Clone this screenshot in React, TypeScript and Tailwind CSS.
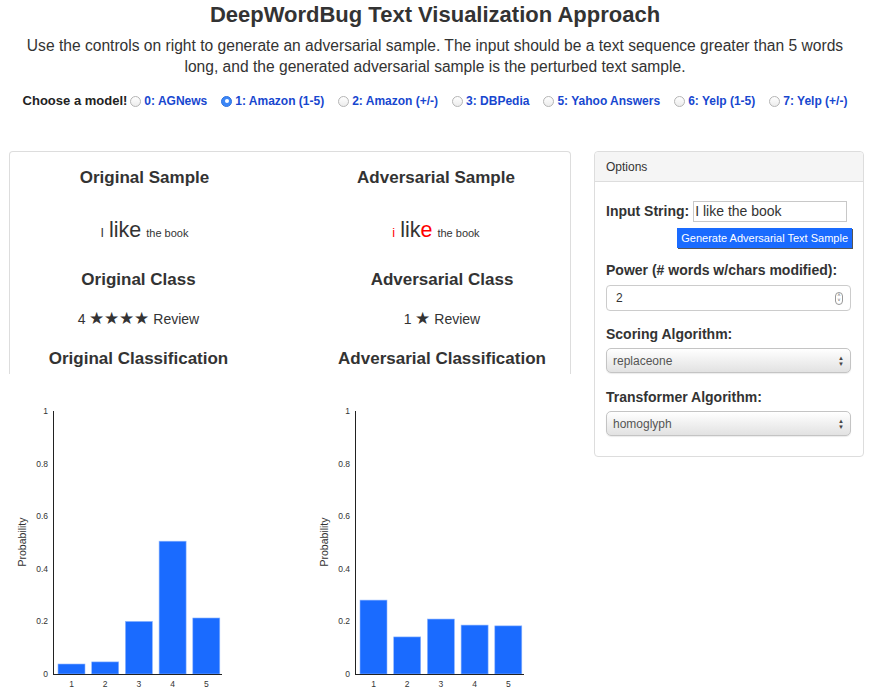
import React from 'react';

const models = [
  { id: 0, label: '0: AGNews' },
  { id: 1, label: '1: Amazon (1-5)' },
  { id: 2, label: '2: Amazon (+/-)' },
  { id: 3, label: '3: DBPedia' },
  { id: 5, label: '5: Yahoo Answers' },
  { id: 6, label: '6: Yelp (1-5)' },
  { id: 7, label: '7: Yelp (+/-)' },
];

const original = [0.038, 0.046, 0.2, 0.505, 0.213];
const adversarial = [0.281, 0.141, 0.209, 0.186, 0.183];

function Radio({ checked }: { checked: boolean }) {
  return checked ? (
    <span className="inline-flex items-center justify-center w-[11px] h-[11px] rounded-full bg-[#3b86f7] border border-[#2f73e0] mx-[3px]">
      <span className="w-[4px] h-[4px] rounded-full bg-white" />
    </span>
  ) : (
    <span className="inline-block w-[11px] h-[11px] rounded-full border border-[#b5b5b5] bg-gradient-to-b from-white to-[#ececec] mx-[3px]" />
  );
}

function Chart({ data }: { data: number[] }) {
  const y0 = 275;
  const h = 263;
  const ticks = [0, 0.2, 0.4, 0.6, 0.8, 1];
  return (
    <svg width="240" height="293" className="block" fontFamily="'Liberation Sans', Arial, sans-serif">
      <text
        x="0"
        y="0"
        fontSize="10.5"
        fill="#333"
        textAnchor="middle"
        transform="translate(26 143) rotate(-90)"
      >
        Probability
      </text>
      {ticks.map(t => (
        <text key={t} x="48" y={y0 - t * h + 3} fontSize="8.5" fill="#333" textAnchor="end">
          {t}
        </text>
      ))}
      {data.map((v, i) => {
        const x = 58 + i * 33.7;
        return (
          <g key={i}>
            <rect
              x={x}
              y={y0 - v * h}
              width="27"
              height={v * h}
              fill="#1a6bff"
              stroke="#8fb6ff"
              strokeWidth="0.6"
            />
            <text x={x + 13.5} y="288" fontSize="8.5" fill="#333" textAnchor="middle">
              {i + 1}
            </text>
          </g>
        );
      })}
      <line x1="53.5" y1="12" x2="53.5" y2={y0 + 0.5} stroke="#222" strokeWidth="1" />
      <line x1="53" y1={y0 + 0.5} x2="222" y2={y0 + 0.5} stroke="#222" strokeWidth="1" />
    </svg>
  );
}

function SelectBox({ value }: { value: string }) {
  return (
    <div className="h-[25px] w-[245px] flex items-center justify-between rounded-[5px] border border-[#c4c4c4] bg-gradient-to-b from-white to-[#e2e2e2] pl-[6px] pr-[6px] shadow-[0_1px_1px_rgba(0,0,0,0.08)]">
      <span className="text-[12px] text-[#555]">{value}</span>
      <span className="flex flex-col text-[6px] leading-[6px] text-[#444]">
        <span>▲</span>
        <span>▼</span>
      </span>
    </div>
  );
}

export default function App() {
  return (
    <div className="w-[870px] h-[693px] overflow-hidden bg-white text-[#333] font-['Liberation_Sans',Arial,sans-serif]">
      <h1 className="text-center text-[22px] font-bold leading-[30px]">
        DeepWordBug Text Visualization Approach
      </h1>
      <p className="mt-[5px] text-center text-[15.6px] leading-[21px]">
        Use the controls on right to generate an adversarial sample. The input should be a text sequence greater than 5 words
        <br />
        long, and the generated adversarial sample is the perturbed text sample.
      </p>
      <div className="mt-[14px] flex items-center justify-center h-[20px] font-bold">
        <span className="text-[#222] text-[13px]">Choose a model!</span>
        {models.map(m => (
          <span key={m.id} className="inline-flex items-center text-[12px] text-[#1747cf] mr-[11px] last:mr-0">
            <Radio checked={m.id === 1} />
            {m.label}
          </span>
        ))}
      </div>

      <div className="mt-[40px] flex pl-[9px] gap-[23px]">
        <div className="w-[562px]">
          <div className="h-[223px] border-t border-x border-[#ddd] rounded-t-[4px] grid grid-cols-[269px_1fr]">
            <div className="flex flex-col items-center">
              <h3 className="mt-[14px] text-[17px] font-bold leading-[24px]">Original Sample</h3>
              <div className="mt-[24px] h-[26px] flex items-baseline gap-[5px] text-[#333]">
                <span className="text-[12.5px]">I</span>
                <span className="text-[21.5px]">like</span>
                <span className="text-[11px]">the book</span>
              </div>
              <div className="flex flex-col items-center pr-[12px]">
                <h3 className="mt-[28px] text-[17px] font-bold leading-[24px]">Original Class</h3>
                <div className="mt-[18px] text-[14px] leading-[18px]">
                  4 <span className="text-[17px]">★★★★</span> Review
                </div>
                <h3 className="mt-[19px] text-[17px] font-bold leading-[24px]">Original Classification</h3>
              </div>
            </div>
            <div className="flex flex-col items-center pl-[23px]">
              <h3 className="mt-[14px] text-[17px] font-bold leading-[24px]">Adversarial Sample</h3>
              <div className="mt-[24px] h-[26px] flex items-baseline gap-[5px] text-[#333]">
                <span className="text-[12.5px] text-[#ff0000]">i</span>
                <span className="text-[21.5px]">
                  lik<span className="text-[#ff0000]">e</span>
                </span>
                <span className="text-[11px]">the book</span>
              </div>
              <div className="flex flex-col items-center pl-[12px]">
                <h3 className="mt-[28px] text-[17px] font-bold leading-[24px]">Adversarial Class</h3>
                <div className="mt-[18px] text-[14px] leading-[18px]">
                  1 <span className="text-[17px]">★</span> Review
                </div>
                <h3 className="mt-[19px] text-[17px] font-bold leading-[24px]">Adversarial Classification</h3>
              </div>
            </div>
          </div>
          <div className="mt-[25px] -ml-[9px] flex gap-[62px]">
            <Chart data={original} />
            <Chart data={adversarial} />
          </div>
        </div>

        <div className="w-[270px] h-[306px] border border-[#ddd] rounded-[4px] self-start">
          <div className="h-[30px] flex items-center px-[11px] bg-[#f5f5f5] border-b border-[#ddd] rounded-t-[4px] text-[12px]">
            Options
          </div>
          <div className="px-[11px] pt-[19px]">
            <div className="flex items-center h-[21px]">
              <label className="text-[14px] font-bold">Input String:</label>
              <div className="ml-[4px] w-[154px] h-[21px] border border-[#c8c8c8] flex items-center px-[1px] text-[14px] text-[#333]">
                I like the book
              </div>
            </div>
            <div className="mt-[6px] flex justify-end">
              <button className="h-[20px] px-[4px] bg-[#1a6bff] text-white text-[11px] leading-[20px] shadow-[1px_1px_0_#555]">
                Generate Adversarial Text Sample
              </button>
            </div>
            <div className="mt-[12px] text-[14px] font-bold leading-[20px]">Power (# words w/chars modified):</div>
            <div className="mt-[5px] h-[26px] w-[245px] rounded-[4px] border border-[#ccc] flex items-center justify-between pl-[9px] pr-[7px] text-[12px]">
              <span>2</span>
              <span className="w-[8px] h-[13px] rounded-full border border-[#999] flex flex-col items-center justify-center text-[5px] leading-[5px] text-[#555]">
                <span>˄</span>
                <span>˅</span>
              </span>
            </div>
            <div className="mt-[13px] text-[14px] font-bold leading-[20px]">Scoring Algorithm:</div>
            <div className="mt-[4px]">
              <SelectBox value="replaceone" />
            </div>
            <div className="mt-[14px] text-[14px] font-bold leading-[20px]">Transformer Algorithm:</div>
            <div className="mt-[4px]">
              <SelectBox value="homoglyph" />
            </div>
          </div>
        </div>
      </div>
    </div>
  );
}
